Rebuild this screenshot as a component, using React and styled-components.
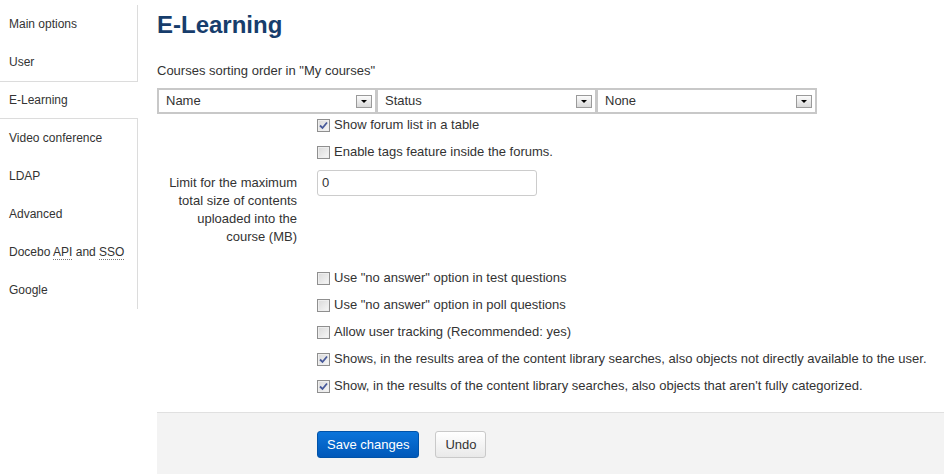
import React from "react";
import styled, { createGlobalStyle, css } from "styled-components";

const Global = createGlobalStyle`
  html, body { margin: 0; padding: 0; background: #fff; }
  body { font-family: "Liberation Sans", Arial, sans-serif; color: #333; }
  * { box-sizing: border-box; }
`;

const Layout = styled.div`
  display: flex;
  align-items: flex-start;
`;

const Sidebar = styled.ul`
  list-style: none;
  margin: 0;
  padding: 5px 0 0;
  width: 138px;
  flex: none;
`;

const NavItem = styled.li`
  height: 38px;
  line-height: 38px;
  padding-left: 9px;
  font-size: 12px;
  color: #333;
  border-right: 1px solid #dcdcdc;
  white-space: nowrap;
  ${(p) =>
    p.$active &&
    css`
      border-right: none;
      border-top: 1px solid #dcdcdc;
      border-bottom: 1px solid #dcdcdc;
      line-height: 36px;
    `}
`;

const Abbr = styled.abbr`
  text-decoration: none;
  border-bottom: 1px dotted #777;
`;

const Main = styled.main`
  flex: 1;
  margin-left: 19px;
  padding-top: 11px;
  font-size: 13px;
  line-height: 18px;
`;

const Title = styled.h1`
  margin: 0 0 23px;
  font-size: 24px;
  line-height: 28px;
  font-weight: bold;
  color: #173d6c;
`;

const Caption = styled.div`
  margin-bottom: 8px;
`;

const SelectGroup = styled.div`
  display: flex;
  margin-bottom: 2px;
`;

const Select = styled.div`
  width: 220px;
  height: 26px;
  border: 2px solid #c8c8c8;
  display: flex;
  align-items: center;
  justify-content: space-between;
  padding: 0 3px 0 7px;
  background: #fff;
  & + & {
    border-left-width: 1px;
  }
`;

const Arrow = styled.span`
  width: 16px;
  height: 13px;
  border: 1px solid #9a9a9a;
  background: linear-gradient(#fbfbfb, #d9d9d9);
  display: flex;
  align-items: center;
  justify-content: center;
  &::after {
    content: "";
    border-left: 3px solid transparent;
    border-right: 3px solid transparent;
    border-top: 3px solid #000;
  }
`;

const Row = styled.div`
  display: grid;
  grid-template-columns: 140px 1fr;
  column-gap: 20px;
  margin-bottom: ${(p) => p.$gap ?? 9}px;
`;

const FieldLabel = styled.div`
  text-align: right;
  padding-top: 4px;
`;

const TextInput = styled.div`
  width: 220px;
  height: 26px;
  border: 1px solid #cccccc;
  border-radius: 3px;
  padding: 0 4px;
  line-height: 24px;
  background: #fff;
`;

const Check = styled.label`
  grid-column: 2;
  display: flex;
  align-items: center;
  gap: 4px;
  height: 18px;
  white-space: nowrap;
`;

const Box = styled.span`
  width: 13px;
  height: 13px;
  flex: none;
  border: 1px solid #8f8f8f;
  background: linear-gradient(135deg, #d9d9d9, #f7f7f7);
  box-shadow: inset 0 0 0 1px #eeeeee;
  display: flex;
  align-items: center;
  justify-content: center;
`;

const Footer = styled.div`
  margin-top: 17px;
  border-top: 1px solid #e0e0e0;
  background: #f3f3f3;
  padding: 18px 0 16px 160px;
  display: flex;
  gap: 16px;
`;

const Button = styled.button`
  height: 27px;
  padding: 0 9px;
  border-radius: 3px;
  font-family: "Liberation Sans", Arial, sans-serif;
  font-size: 13px;
  cursor: pointer;
  ${(p) =>
    p.$primary
      ? css`
          color: #fff;
          border: 1px solid #0052a8;
          background: linear-gradient(#0b74da, #0058b9);
        `
      : css`
          color: #333;
          border: 1px solid #c9c9c9;
          background: linear-gradient(#ffffff, #e9e9e9);
        `}
`;

const Checkbox = ({ checked, children }) => (
  <Check>
    <Box>
      {checked && (
        <svg width="9" height="9" viewBox="0 0 9 9">
          <path d="M1 4.5 L3.5 7 L8 1.5" fill="none" stroke="#47599a" strokeWidth="1.8" />
        </svg>
      )}
    </Box>
    {children}
  </Check>
);

const navItems = [
  "Main options",
  "User",
  "E-Learning",
  "Video conference",
  "LDAP",
  "Advanced",
  "api",
  "Google",
];

export default function App() {
  return (
    <>
      <Global />
      <Layout>
        <Sidebar>
          {navItems.map((n) => (
            <NavItem key={n} $active={n === "E-Learning"}>
              {n === "api" ? (
                <>
                  Docebo <Abbr>API</Abbr> and <Abbr>SSO</Abbr>
                </>
              ) : (
                n
              )}
            </NavItem>
          ))}
        </Sidebar>
        <Main>
          <Title>E-Learning</Title>
          <Caption>Courses sorting order in "My courses"</Caption>
          <SelectGroup>
            {["Name", "Status", "None"].map((s) => (
              <Select key={s}>
                {s}
                <Arrow />
              </Select>
            ))}
          </SelectGroup>
          <Row>
            <Checkbox checked>Show forum list in a table</Checkbox>
          </Row>
          <Row>
            <Checkbox>Enable tags feature inside the forums.</Checkbox>
          </Row>
          <Row $gap={23}>
            <FieldLabel>
              Limit for the maximum total size of contents uploaded into the course (MB)
            </FieldLabel>
            <div>
              <TextInput>0</TextInput>
            </div>
          </Row>
          <Row>
            <Checkbox>Use "no answer" option in test questions</Checkbox>
          </Row>
          <Row>
            <Checkbox>Use "no answer" option in poll questions</Checkbox>
          </Row>
          <Row>
            <Checkbox>Allow user tracking (Recommended: yes)</Checkbox>
          </Row>
          <Row>
            <Checkbox checked>
              Shows, in the results area of the content library searches, also objects not directly available to the user.
            </Checkbox>
          </Row>
          <Row $gap={0}>
            <Checkbox checked>
              Show, in the results of the content library searches, also objects that aren't fully categorized.
            </Checkbox>
          </Row>
          <Footer>
            <Button $primary>Save changes</Button>
            <Button>Undo</Button>
          </Footer>
        </Main>
      </Layout>
    </>
  );
}
